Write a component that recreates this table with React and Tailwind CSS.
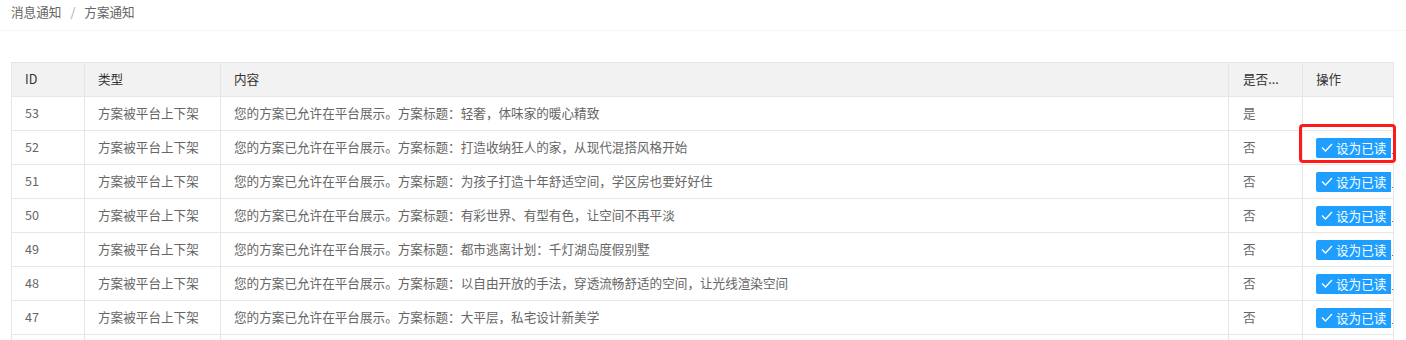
const rows = [
  { id: 53, title: '轻奢，体味家的暖心精致', read: true },
  { id: 52, title: '打造收纳狂人的家，从现代混搭风格开始', read: false },
  { id: 51, title: '为孩子打造十年舒适空间，学区房也要好好住', read: false },
  { id: 50, title: '有彩世界、有型有色，让空间不再平淡', read: false },
  { id: 49, title: '都市逃离计划：千灯湖岛度假别墅', read: false },
  { id: 48, title: '以自由开放的手法，穿透流畅舒适的空间，让光线渲染空间', read: false },
  { id: 47, title: '大平层，私宅设计新美学', read: false },
];

const Check = () => (
  <svg width="12" height="9" viewBox="0 0 12 9" fill="none" className="shrink-0">
    <polyline points="1,4.5 4.5,8 11,1" stroke="white" strokeWidth="1.3" />
  </svg>
);

const ReadButton = () => (
  <div className="flex items-center">
    <div className="w-[75px] overflow-hidden">
      <div className="w-[80px] h-[20px] bg-[#1e9fff] rounded-[2px] flex items-center pl-[5px] gap-[3px] text-white">
        <Check />
        <span className="whitespace-nowrap leading-[20px]">设为已读</span>
      </div>
    </div>
    <span className="w-[1px] h-[1.5px] bg-[#9a5e4e] ml-[1px] mt-[12px]" />
  </div>
);

const Row = ({ cells, header }) => (
  <div className={`flex h-[34px] border-b border-[#e6e6e6] ${header ? 'bg-[#f2f2f2] text-[#333]' : 'bg-white text-[#666]'}`}>
    <div className="w-[73px] border-r border-[#e6e6e6] pl-[13px] flex items-center">{cells[0]}</div>
    <div className="w-[136px] border-r border-[#e6e6e6] pl-[13px] flex items-center">{cells[1]}</div>
    <div className="w-[1008px] border-r border-[#e6e6e6] pl-[13px] flex items-center whitespace-nowrap">{cells[2]}</div>
    <div className="w-[74px] border-r border-[#e6e6e6] pl-[14px] flex items-center">{cells[3]}</div>
    <div className="w-[90px] pl-[13px] flex items-center">{cells[4]}</div>
  </div>
);

export default function App() {
  return (
    <div className="relative h-[340px] overflow-hidden bg-white text-[12.6px] font-['Noto_Sans_CJK_SC','Microsoft_YaHei',sans-serif]">
      <div className="h-[31px] border-b border-[#f6f6f6] pl-[11px] flex items-start pt-[3px] text-[#666] leading-[18px]">
        <span>消息通知</span>
        <span className="mx-[9px] text-[#aaa]">/</span>
        <span>方案通知</span>
      </div>
      <div className="ml-[11px] mt-[31px] w-[1383px] border-l border-r border-t border-[#e6e6e6]">
        <Row header cells={['ID', '类型', '内容', '是否...', '操作']} />
        {rows.map((r) => (
          <Row
            key={r.id}
            cells={[
              r.id,
              '方案被平台上下架',
              `您的方案已允许在平台展示。方案标题：${r.title}`,
              r.read ? '是' : '否',
              r.read ? null : <ReadButton />,
            ]}
          />
        ))}
        <Row cells={[null, null, null, null, null]} />
      </div>
      <div className="absolute left-[1299px] top-[124px] w-[97px] h-[39px] border-[3px] border-[#ff1a1a] rounded-[4px]" />
    </div>
  );
}
